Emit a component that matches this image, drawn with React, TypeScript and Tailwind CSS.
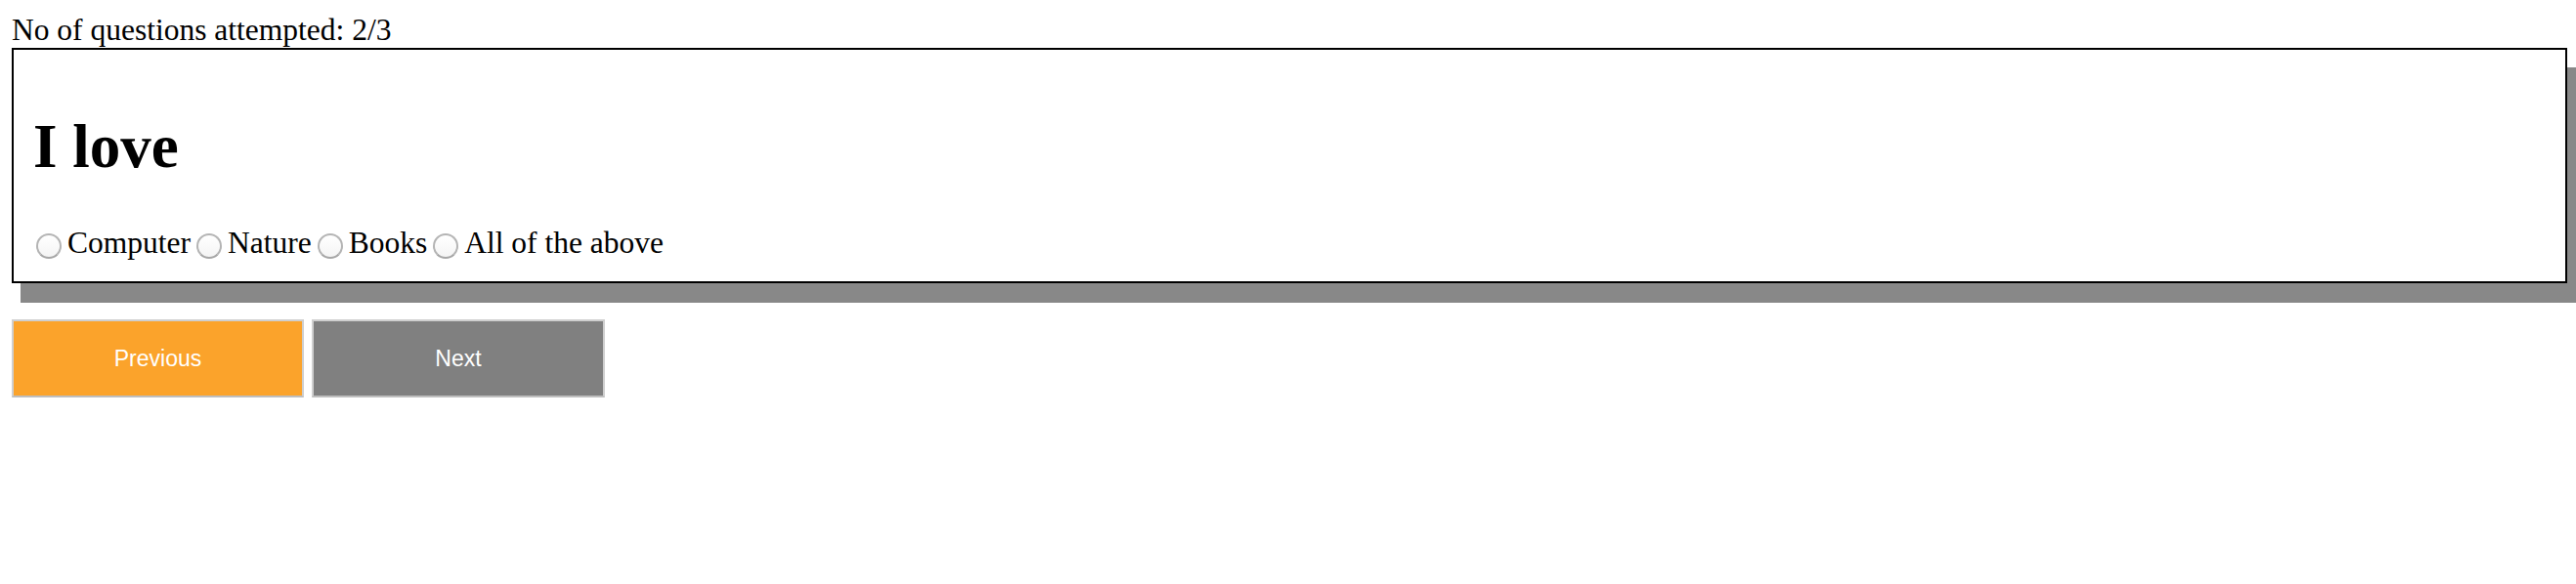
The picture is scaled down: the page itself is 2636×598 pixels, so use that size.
import { useState } from "react";

const options = ["Computer", "Nature", "Books", "All of the above"];

export default function App() {
  const [picked, setPicked] = useState<string | null>(null);

  return (
    <div className="min-h-screen bg-white pl-[12px] pr-[9px] pt-[12px] text-black font-['Liberation_Serif','Times_New_Roman',serif]">
      <div className="text-[31.5px] leading-[37px]">No of questions attempted: 2/3</div>

      {/* Question card */}
      <div className="border-2 border-black bg-white pl-[17px] pb-[21px] shadow-[9px_20px_0_0_#888888]">
        <h1 className="mt-[63px] mb-[44px] pl-[3px] text-[63px] leading-[72px] font-bold">I love</h1>
        <div className="flex items-end text-[31.5px] leading-[37px]">
          {options.map((opt) => (
            <label key={opt} className="flex items-end">
              <input
                type="radio"
                name="answer"
                checked={picked === opt}
                onChange={() => setPicked(opt)}
                className="appearance-none mx-[6px] mb-[2px] w-[26px] h-[26px] shrink-0 rounded-full border-2 border-[#b4b4b4] border-b-[#a6a6a6] bg-gradient-to-b from-white to-[#f4f4f4] checked:border-[#3b82f6]"
              />
              <span>{opt}</span>
            </label>
          ))}
        </div>
      </div>

      {/* Navigation */}
      <div className="mt-[37px] flex gap-[8px] font-['Liberation_Sans',Arial,sans-serif] text-[23px] text-white">
        <button className="w-[299px] h-[80px] bg-[#fba32b] border-2 border-[#cfcfcf] border-b-[#bebebe]">
          Previous
        </button>
        <button className="w-[300px] h-[80px] bg-[#808080] border-2 border-[#cfcfcf] border-b-[#bebebe]">
          Next
        </button>
      </div>
    </div>
  );
}
